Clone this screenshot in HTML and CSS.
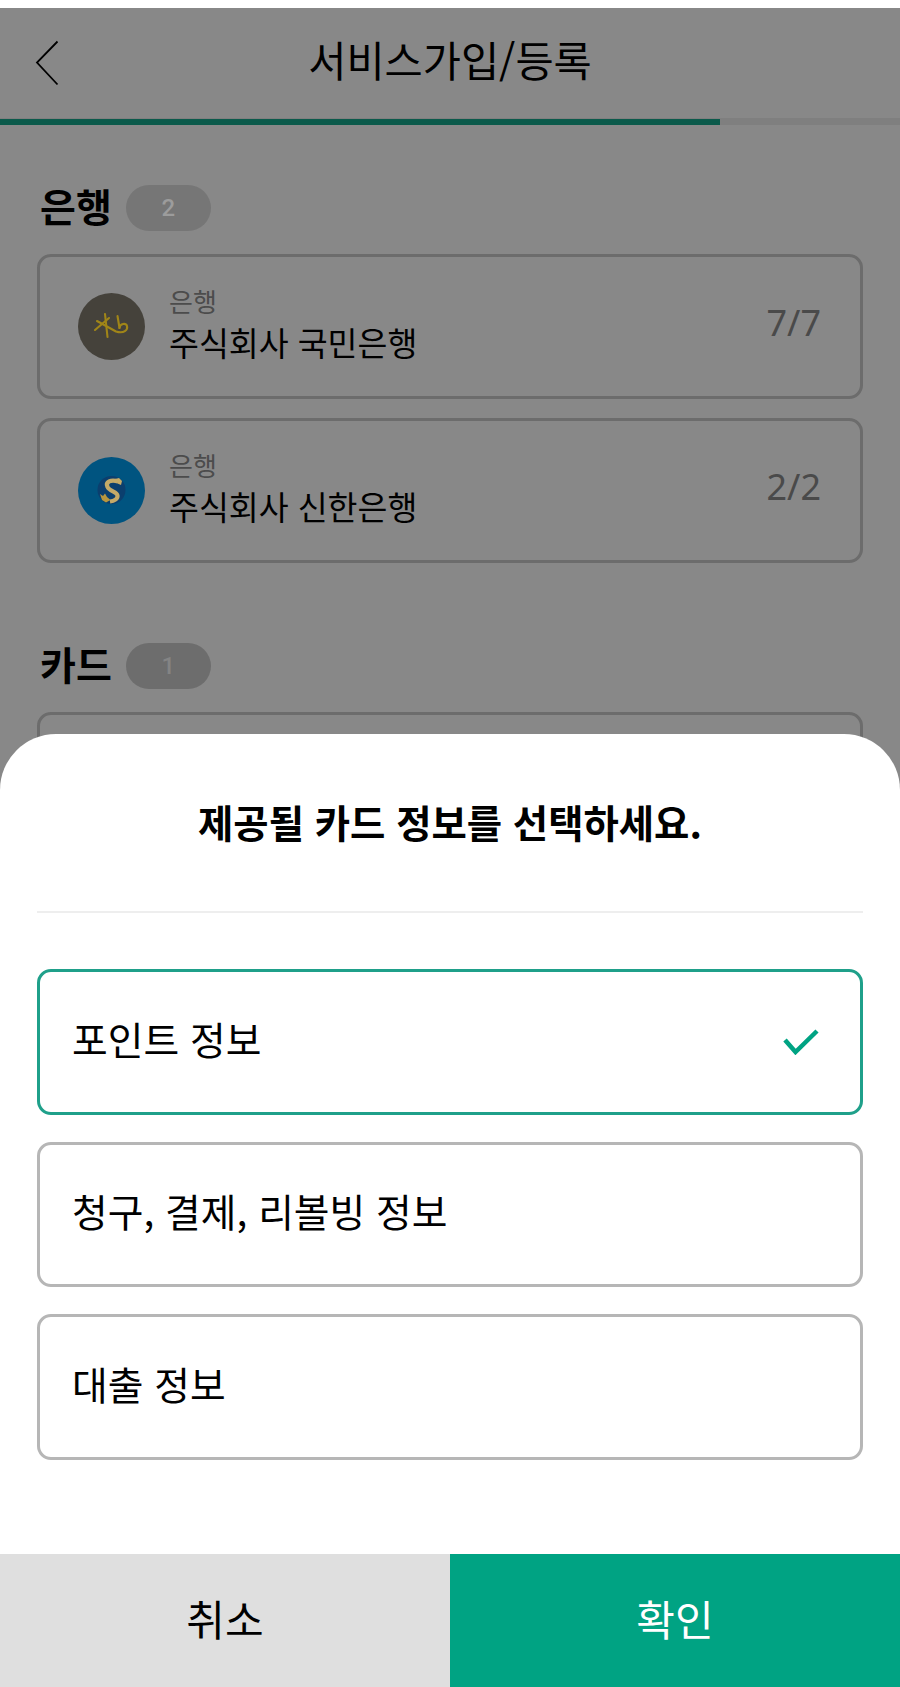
FILE: index.html
```html
<!DOCTYPE html>
<html lang="ko">
<head>
<meta charset="utf-8">
<title>서비스가입/등록</title>
<link rel="stylesheet" href="styles.css">
</head>
<body>
<div class="screen">
  <header class="topbar">
    <svg class="back" viewBox="0 0 24 46" aria-hidden="true"><path d="M22.5 1.5 2 22.500 22.500 44.500"/></svg>
    <h1 class="topbar-title">서비스가입/등록</h1>
  </header>
  <div class="progress"><div class="progress-fill"></div></div>

  <section class="group">
    <div class="group-head"><h2 class="group-title">은행</h2><span class="badge">2</span></div>
    <div class="org">
      <svg class="org-logo" viewBox="0 0 67 67" aria-hidden="true">
        <circle cx="33.500" cy="33.500" r="33.500" fill="#45423b"/>
        <g fill="none" stroke="#a08518" stroke-width="2.100" stroke-linecap="round" stroke-linejoin="round">
          <path d="M27 21 29.500 44"/><path d="M17 37 31 25"/><path d="M19 28 38 38.500C46 41 50 37 49 33 48 30 42 30 41.500 35"/><path d="M39.500 23 41.500 35"/>
        </g>
      </svg>
      <div class="org-text"><span class="org-kind">은행</span><span class="org-name">주식회사 국민은행</span></div>
      <span class="org-count">7/7</span>
    </div>
    <div class="org">
      <svg class="org-logo" viewBox="0 0 67 67" aria-hidden="true">
        <circle cx="33.500" cy="33.500" r="33.500" fill="#005480"/>
        <circle cx="33.500" cy="33" r="14" fill="#0b3f6e"/>
        <path d="M40 24.500C33 22 27 25 29.500 30 31.500 34.500 39 34.500 39.500 38.500 40 42 36 44 32 44.500" fill="none" stroke="#c4aa68" stroke-width="4.200"/>
        <path d="M37 22 41 21 44 24 43 28 39.500 26.500Z" fill="#c4aa68"/>
        <path d="M22 37 25 39 27 36.500 29 40 32.500 43 28 45.500 24 43Z" fill="#b8963e"/>
      </svg>
      <div class="org-text"><span class="org-kind">은행</span><span class="org-name">주식회사 신한은행</span></div>
      <span class="org-count">2/2</span>
    </div>
  </section>

  <section class="group group-next">
    <div class="group-head"><h2 class="group-title">카드</h2><span class="badge badge-dark">1</span></div>
    <div class="org"></div>
  </section>

  <div class="sheet">
    <h2 class="sheet-title">제공될 카드 정보를 선택하세요.</h2>
    <div class="sheet-options">
      <div class="option option-on">
        <span>포인트 정보</span>
        <svg class="check" viewBox="0 0 36 26" aria-hidden="true"><path d="M2 11 12.500 23 34 2"/></svg>
      </div>
      <div class="option"><span>청구, 결제, 리볼빙 정보</span></div>
      <div class="option"><span>대출 정보</span></div>
    </div>
    <div class="actions">
      <div class="action action-cancel">취소</div>
      <div class="action action-ok">확인</div>
    </div>
  </div>
</div>
</body>
</html>
```
FILE: styles.css
```css
* { box-sizing: border-box; margin: 0; padding: 0; }
html, body { background: #fff; }
body {
  padding-top: 8px;
  font-family: "Noto Sans CJK KR", "Noto Sans", sans-serif;
  color: #000;
}
.screen {
  position: relative;
  height: 1679px;
  overflow: hidden;
  background: #888;
}
.topbar {
  position: relative;
  height: 110px;
  display: flex;
  align-items: center;
  justify-content: center;
}
.back {
  position: absolute;
  left: 35px;
  top: 32px;
  width: 24px;
  height: 46px;
  fill: none;
  stroke: #000;
  stroke-width: 1.800;
}
.topbar-title {
  font-size: 41.500px;
  font-weight: 400;
  line-height: 50px;
  margin-top: -8px;
}
.progress { height: 7px; padding-top: 1px; background: #7f7f7f; }
.progress-fill { width: 720px; height: 6px; background: #0b5a4b; }
.group { padding: 60px 37px 0; }
.group-next { padding-top: 61px; }
.group-head { display: flex; align-items: center; gap: 14px; height: 46px; margin-bottom: 23px; padding-left: 3px; }
.group-title { font-size: 39px; font-weight: 700; line-height: 46px; margin-top: -6px; }
.badge {
  width: 85px;
  height: 46px;
  border-radius: 23px;
  background: #767676;
  color: #9c9c9c;
  font-family: Roboto, sans-serif;
  font-size: 24px;
  font-weight: 500;
  display: flex;
  align-items: center;
  justify-content: center;
}
.badge-dark { background: #6d6d6d; color: #848484; }
.org {
  height: 145px;
  border: 3px solid #6c6c6c;
  border-radius: 14px;
  display: flex;
  align-items: center;
  padding: 0 39px 0 38px;
  margin-bottom: 19px;
}
.org-logo { width: 67px; height: 67px; flex: none; }
.org-text { display: flex; flex-direction: column; margin-left: 24px; flex: 1; }
.org-kind { font-size: 26px; line-height: 32px; color: #4c4c4c; margin-top: -6px; margin-bottom: 4px; }
.org-name { font-size: 32.500px; line-height: 42px; color: #000; }
.org-count { font-family: "Noto Sans", sans-serif; font-size: 36px; font-weight: 400; line-height: 46px; color: #4a4a4a; padding-bottom: 7px; }

.sheet {
  position: absolute;
  left: 0;
  right: 0;
  bottom: 0;
  height: 953px;
  background: #fff;
  border-radius: 56px 56px 0 0;
  display: flex;
  flex-direction: column;
}
.sheet-title {
  height: 179px;
  margin: 0 37px;
  padding-top: 62px;
  border-bottom: 2px solid #eee;
  text-align: center;
  font-size: 38.400px;
  font-weight: 700;
  line-height: 50px;
}
.sheet-options { display: flex; flex-direction: column; gap: 27px; padding: 56px 37px 0; flex: 1; }
.option {
  height: 145.500px;
  border: 3px solid #b6b6b6;
  border-radius: 14px;
  background: #fff;
  display: flex;
  align-items: center;
  justify-content: space-between;
  padding: 0 41px 8px 32px;
  font-size: 38.800px;
  line-height: 50px;
}
.option-on { border-color: #1fa08a; }
.check { width: 36px; height: 26px; fill: none; stroke: #00a383; stroke-width: 4.500; margin-top: 8px; }
.actions { display: flex; height: 133px; }
.action { flex: 1; display: flex; align-items: center; justify-content: center; font-size: 42px; padding-bottom: 6px; }
.action-cancel { background: #dfdfdf; color: #000; }
.action-ok { background: #00a383; color: #fff; }
```
